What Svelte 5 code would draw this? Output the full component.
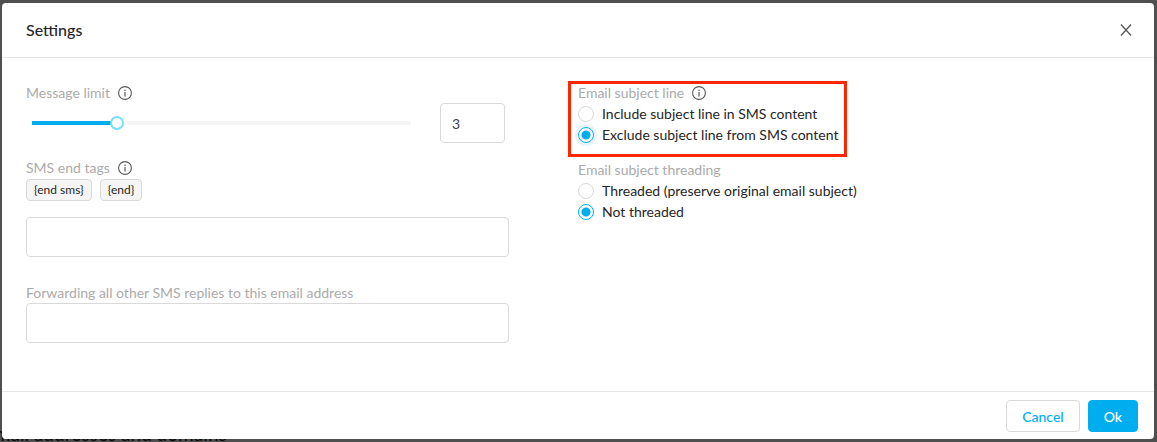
<script>
  const min = 1;
  const max = 10;

  let messageLimit = $state(3);
  let subjectLine = $state('exclude');
  let threading = $state('not-threaded');
  let endTag = $state('');
  let forwardTo = $state('');

  let fraction = $derived((messageLimit - min) / (max - min));

  const tags = ['{end sms}', '{end}'];
</script>

{#snippet infoIcon()}
  <svg class="info" viewBox="0 0 14 14" aria-hidden="true">
    <circle cx="7" cy="7" r="6.4" fill="none" stroke="currentColor" stroke-width="1.1" />
    <circle cx="7" cy="4.2" r="0.8" fill="currentColor" />
    <path d="M7 6v4.4" stroke="currentColor" stroke-width="1.2" />
  </svg>
{/snippet}

<div class="page">
  <h2 class="backdrop-title">Email addresses and domains</h2>

  <div class="modal" role="dialog" aria-labelledby="modal-title">
    <header>
      <h1 id="modal-title">Settings</h1>
      <button class="close" aria-label="Close">
        <svg viewBox="0 0 12 12" aria-hidden="true">
          <path d="M1 0.5L11 11.5M11 0.5L1 11.5" fill="none" stroke="currentColor" stroke-width="1.3" />
        </svg>
      </button>
    </header>

    <div class="body">
      <div class="column left">
        <div class="group">
          <label class="label" for="message-limit">Message limit {@render infoIcon()}</label>
          <div class="limit">
            <input
              id="message-limit"
              type="range"
              {min}
              {max}
              bind:value={messageLimit}
              style="--fraction: {fraction}"
            />
            <input class="text number" type="text" aria-label="Message limit value" bind:value={messageLimit} />
          </div>
        </div>

        <div class="group tags-group">
          <label class="label" for="end-tag">SMS end tags {@render infoIcon()}</label>
          <div class="tags">
            {#each tags as tag}
              <span class="tag">{tag}</span>
            {/each}
          </div>
          <input id="end-tag" class="text" type="text" bind:value={endTag} />
        </div>

        <div class="group">
          <label class="label" for="forward-to">Forwarding all other SMS replies to this email address</label>
          <input id="forward-to" class="text" type="email" bind:value={forwardTo} />
        </div>
      </div>

      <div class="column">
        <div class="group highlighted">
          <fieldset>
            <legend class="label">Email subject line {@render infoIcon()}</legend>
            <label class="radio">
              <input type="radio" value="include" bind:group={subjectLine} />
              Include subject line in SMS content
            </label>
            <label class="radio focused">
              <input type="radio" value="exclude" bind:group={subjectLine} />
              Exclude subject line from SMS content
            </label>
          </fieldset>
        </div>

        <div class="group">
          <fieldset>
            <legend class="label">Email subject threading</legend>
            <label class="radio">
              <input type="radio" value="threaded" bind:group={threading} />
              Threaded (preserve original email subject)
            </label>
            <label class="radio">
              <input type="radio" value="not-threaded" bind:group={threading} />
              Not threaded
            </label>
          </fieldset>
        </div>
      </div>
    </div>

    <footer>
      <button class="btn">Cancel</button>
      <button class="btn primary">Ok</button>
    </footer>
  </div>
</div>

<style>
  :global(body) {
    background: #4f4f4f;
  }

  .page {
    position: relative;
    padding: 3px;
    padding-left: 2px;
    overflow: hidden;
    font-family: Lato, "Open Sans", sans-serif;
    font-size: 14px;
    line-height: 21px;
    color: #262626;
  }

  /* page heading that shows below the dialog */
  .backdrop-title {
    position: absolute;
    left: -16px;
    bottom: -4px;
    margin: 0;
    font-size: 19px;
    line-height: 24px;
    font-weight: 500;
    color: #0c0c0c;
  }

  .modal {
    position: relative;
    background: #fff;
    border-radius: 4px;
  }

  header {
    display: flex;
    align-items: center;
    justify-content: space-between;
    padding: 16px 22px 16px 24px;
    border-bottom: 1px solid #e6e6e6;
  }

  h1 {
    margin: 0;
    font-size: 16px;
    line-height: 22px;
    font-weight: 500;
  }

  .close {
    display: flex;
    padding: 0;
    border: none;
    background: none;
    color: #595959;
    cursor: pointer;
  }

  .close svg {
    width: 12px;
    height: 12px;
  }

  .body {
    display: grid;
    grid-template-columns: 1fr 1fr;
    padding: 24px 24px 48px;
  }

  .left {
    width: 87.5%;
  }

  .group {
    margin-bottom: 14px;
  }

  .group:last-child {
    margin-bottom: 0;
  }

  .tags-group {
    margin-bottom: 25px;
  }

  fieldset {
    margin: 0;
    padding: 0;
    border: none;
  }

  .label {
    display: flex;
    align-items: center;
    gap: 8px;
    padding: 0;
    color: #ababab;
  }

  .info {
    width: 14px;
    height: 14px;
    color: #595959;
  }

  .limit {
    display: flex;
    align-items: center;
    gap: 23px;
    padding-right: 4px;
  }

  input[type='range'] {
    appearance: none;
    flex: 1;
    min-width: 0;
    height: 14px;
    margin: 0;
    background:
      linear-gradient(#00aeef, #00aeef) 6px center / calc((100% - 12px) * var(--fraction)) 4px no-repeat,
      linear-gradient(#f5f5f5, #f5f5f5) 6px center / calc(100% - 12px) 4px no-repeat;
    cursor: pointer;
  }

  input[type='range']::-webkit-slider-thumb {
    appearance: none;
    box-sizing: border-box;
    width: 14px;
    height: 14px;
    border: 2px solid #73e1ff;
    border-radius: 50%;
    background: #fff;
  }

  .text {
    display: block;
    box-sizing: border-box;
    width: 100%;
    height: 40px;
    padding: 0 11px;
    border: 1px solid #d9d9d9;
    border-radius: 4px;
    font: inherit;
    color: #404040;
    background: #fff;
  }

  .number {
    width: 65px;
  }

  .tags {
    display: flex;
    gap: 8px;
    margin: 1px 0 16px;
  }

  .tag {
    padding: 0 7px;
    border: 1px solid #d9d9d9;
    border-radius: 4px;
    background: #f5f5f5;
    font-size: 12px;
    line-height: 20px;
  }

  .highlighted {
    position: relative;
    width: fit-content;
  }

  .highlighted::after {
    content: '';
    position: absolute;
    inset: -1px -9px -12px -10px;
    border: 3px solid #ff2600;
    pointer-events: none;
  }

  .radio {
    display: flex;
    align-items: center;
    gap: 8px;
    cursor: pointer;
  }

  input[type='radio'] {
    appearance: none;
    box-sizing: border-box;
    width: 16px;
    height: 16px;
    margin: 0;
    border: 1px solid #d9d9d9;
    border-radius: 50%;
    background: #fff;
  }

  input[type='radio']:checked {
    border-color: #00aeef;
    background: radial-gradient(circle, #00aeef 4px, #fff 5px);
  }

  .focused input {
    box-shadow: 0 0 0 3px #e6f5fd;
  }

  footer {
    display: flex;
    justify-content: flex-end;
    gap: 8px;
    padding: 8px 16px 7px;
    border-top: 1px solid #e6e6e6;
  }

  .btn {
    height: 32px;
    padding: 0 15px;
    border: 1px solid #d9d9d9;
    border-radius: 4px;
    background: #fff;
    font: inherit;
    font-weight: 500;
    color: #00aeef;
    cursor: pointer;
  }

  .primary {
    border-color: #00aeef;
    background: #00aeef;
    color: #fff;
  }
</style>
